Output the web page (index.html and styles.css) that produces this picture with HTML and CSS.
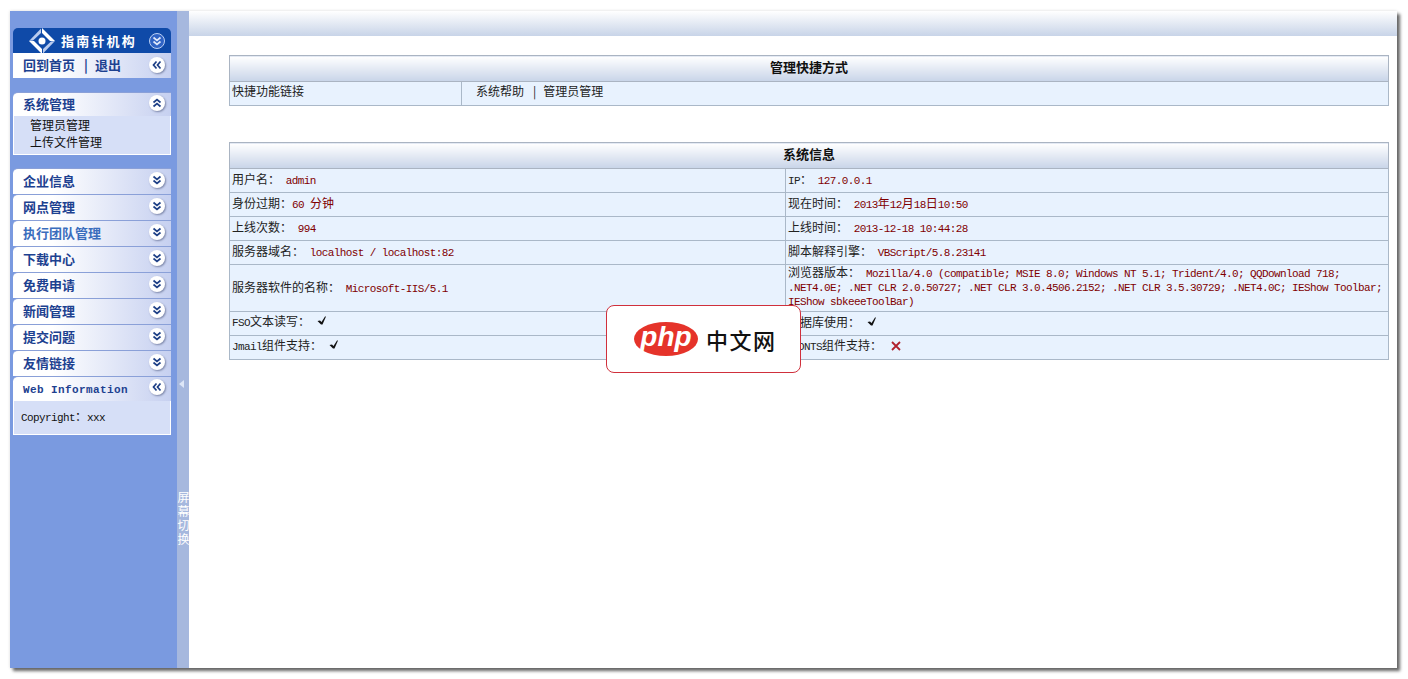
FILE: index.html
```html
<!DOCTYPE html>
<html lang="en">
  <head>
    <meta charset="UTF-8" />
    <title>管理中心</title>
    <link rel="stylesheet" href="styles.css">
  </head>
  <body>
  <svg class="defs" width="0" height="0">
    <symbol id="chev" viewBox="0 0 10 10">
      <path d="M1.5 4.5L5 1.5L8.5 4.5M1.5 8.5L5 5.5L8.5 8.5" fill="none" stroke="currentColor" stroke-width="1.7"/>
    </symbol>
    <symbol id="tick" viewBox="0 0 10 9">
      <path d="M0.5 5L3 4.5L4.5 6L8 0.5L9 0.5L5.5 8.5H4Z" fill="#111"/>
    </symbol>
    <symbol id="cross" viewBox="0 0 10 10">
      <path d="M1 1L9 9M9 1L1 9" fill="none" stroke="#b0202c" stroke-width="1.8"/>
    </symbol>
  </svg>

  <div class="window">
    <div class="side">
      <div class="logo-row">
        <svg class="logo" width="28" height="26" viewBox="0 0 28 26">
          <path d="M14 0L27 13L22 13L14 5Z" fill="#fff"/>
          <path d="M14 26L1 13L6 13L14 21Z" fill="#fff"/>
          <path d="M13 0.5L1 13L5 12.5L13 5Z" fill="#b9cbef"/>
          <path d="M15 25.5L27 13L23 13.5L15 21Z" fill="#b9cbef"/>
          <circle cx="14" cy="13" r="3.5" fill="#fff"/>
        </svg>
        <span class="logo-text">指南针机构</span>
        <span class="round round-blue"><svg width="10" height="10" class="down"><use href="#chev"/></svg></span>
      </div>
      <div class="row home-row">
        <span class="row-title">回到首页<span class="sep">|</span>退出</span>
        <span class="round"><svg width="10" height="10" class="left"><use href="#chev"/></svg></span>
      </div>

      <div class="group">
        <div class="row first-row">
          <span class="row-title">系统管理</span>
          <span class="round"><svg width="10" height="10"><use href="#chev"/></svg></span>
        </div>
        <div class="panel links">
          <div>管理员管理</div>
          <div>上传文件管理</div>
        </div>
      </div>

      <div class="group">
        <div class="row"><span class="row-title">企业信息</span><span class="round"><svg width="10" height="10" class="down"><use href="#chev"/></svg></span></div>
        <div class="row"><span class="row-title">网点管理</span><span class="round"><svg width="10" height="10" class="down"><use href="#chev"/></svg></span></div>
        <div class="row"><span class="row-title hover">执行团队管理</span><span class="round"><svg width="10" height="10" class="down"><use href="#chev"/></svg></span></div>
        <div class="row"><span class="row-title">下载中心</span><span class="round"><svg width="10" height="10" class="down"><use href="#chev"/></svg></span></div>
        <div class="row"><span class="row-title">免费申请</span><span class="round"><svg width="10" height="10" class="down"><use href="#chev"/></svg></span></div>
        <div class="row"><span class="row-title">新闻管理</span><span class="round"><svg width="10" height="10" class="down"><use href="#chev"/></svg></span></div>
        <div class="row"><span class="row-title">提交问题</span><span class="round"><svg width="10" height="10" class="down"><use href="#chev"/></svg></span></div>
        <div class="row"><span class="row-title">友情链接</span><span class="round"><svg width="10" height="10" class="down"><use href="#chev"/></svg></span></div>
        <div class="row first-row"><span class="row-title web-title">Web Information</span><span class="round"><svg width="10" height="10" class="left"><use href="#chev"/></svg></span></div>
        <div class="panel copy"><span class="en">Copyright</span>：<span class="en">xxx</span></div>
      </div>
    </div>

    <div class="split">
      <span class="split-arrow"></span>
      <span class="split-text">屏幕切换</span>
    </div>

    <div class="main">
      <div class="topbar"></div>
      <div class="content">
        <table class="tb">
          <colgroup><col class="c-short"><col></colgroup>
          <tr><th colspan="2">管理快捷方式</th></tr>
          <tr class="r25">
            <td>快捷功能链接</td>
            <td class="quick">系统帮助<span class="sep">|</span>管理员管理</td>
          </tr>
        </table>

        <table class="tb tb-info">
          <colgroup><col class="c-half"><col></colgroup>
          <tr><th colspan="2">系统信息</th></tr>
          <tr>
            <td>用户名： <b class="val en">admin</b></td>
            <td><span class="en">IP</span>： <b class="val en">127.0.0.1</b></td>
          </tr>
          <tr>
            <td>身份过期：<b class="val val-tight"><span class="en">60&nbsp;</span>分钟</b></td>
            <td>现在时间： <b class="val"><span class="en">2013</span>年<span class="en">12</span>月<span class="en">18</span>日<span class="en">10:50</span></b></td>
          </tr>
          <tr>
            <td>上线次数： <b class="val en">994</b></td>
            <td>上线时间： <b class="val en">2013-12-18 10:44:28</b></td>
          </tr>
          <tr>
            <td>服务器域名： <b class="val en">localhost / localhost:82</b></td>
            <td>脚本解释引擎： <b class="val en">VBScript/5.8.23141</b></td>
          </tr>
          <tr class="tall-row">
            <td>服务器软件的名称： <b class="val en">Microsoft-IIS/5.1</b></td>
            <td class="tall"><span class="tall-label">浏览器版本：</span> <b class="val val-tight">Mozilla/4.0 (compatible; MSIE 8.0; Windows NT 5.1; Trident/4.0; QQDownload 718; .NET4.0E; .NET CLR 2.0.50727; .NET CLR 3.0.4506.2152; .NET CLR 3.5.30729; .NET4.0C; IEShow Toolbar; IEShow sbkeeeToolBar)</b></td>
          </tr>
          <tr class="mark-row">
            <td><span class="en">FSO</span>文本读写： <svg class="mark" width="10" height="9"><use href="#tick"/></svg></td>
            <td>数据库使用： <svg class="mark" width="10" height="9"><use href="#tick"/></svg></td>
          </tr>
          <tr class="mark-row">
            <td><span class="en">Jmail</span>组件支持： <svg class="mark" width="10" height="9"><use href="#tick"/></svg></td>
            <td><span class="en fonts">FONTS</span>组件支持： <svg class="mark mark-x" width="10" height="10"><use href="#cross"/></svg></td>
          </tr>
        </table>
      </div>
    </div>
  </div>

  <div class="badge">
    <svg width="66" height="36" viewBox="0 0 66 36">
      <ellipse cx="33" cy="18" rx="32" ry="17" fill="#e5332a"/>
      <text class="badge-php" x="33" y="25" text-anchor="middle">php</text>
    </svg>
    <span class="badge-text">中文网</span>
  </div>
  </body>
</html>
```

FILE: styles.css
```css
body
{
    margin: 0;
    background: #fff;
    font-family: "Noto Sans CJK SC", "Liberation Mono", monospace;
    font-size: 12px;
    color: #222;
}
.defs
{
    position: absolute;
}
.en
{
    font-family: "Liberation Mono", monospace;
    font-size: 11px;
    letter-spacing: -0.6px;
}

.window
{
    display: flex;
    height: 657px;
    margin: 11px 11px 11px 10px;
    box-shadow: 3px 3px 3px #666, 0 0 3px #ddd;
}

/* left menu */
.side
{
    width: 158px;
    padding: 17px 6px 0 3px;
    background: #7a9ae0;
}
.logo-row
{
    display: flex;
    align-items: center;
    height: 25px;
    padding-left: 15px;
    background: #0f4aa8;
    border-radius: 5px 5px 0 0;
    box-sizing: border-box;
}
.logo-text
{
    margin-left: 5px;
    color: #fff;
    font-size: 13px;
    font-weight: 700;
    letter-spacing: 2.2px;
    white-space: nowrap;
}
.round-blue
{
    margin-left: auto;
}
.row
{
    display: flex;
    align-items: center;
    justify-content: space-between;
    box-sizing: border-box;
    height: 26px;
    padding: 0 6px 3px 10px;
    background: linear-gradient(to right, #fff 25%, #c6d0f0);
    border-top: 1px solid #8aa0d8;
    border-radius: 5px 0 0 0;
}
.home-row
{
    height: 25px;
    padding-bottom: 2px;
    border-top: 0;
    border-radius: 0;
}
.first-row
{
    height: 25px;
    padding-bottom: 4px;
}
.row-title
{
    color: #1d4190;
    font-size: 13px;
    font-weight: 700;
    white-space: nowrap;
}
.sep
{
    margin: 0 7px 0 9px;
}
.hover
{
    color: #3a6dbd;
}
.web-title
{
    margin-top: 6px;
    font-family: "Liberation Mono", monospace;
    font-size: 11px;
    letter-spacing: 0.4px;
}
.round
{
    display: flex;
    align-items: center;
    justify-content: center;
    width: 16px;
    height: 16px;
    border-radius: 50%;
    background: #fff;
    color: #1d3f86;
    box-shadow: 1px 1px 2px #7c86a8;
}
.round-blue
{
    margin-right: 6px;
    background: #2f63c4;
    color: #dfe8fa;
    border: 1px solid #bcd0f4;
    box-sizing: border-box;
    box-shadow: none;
}
.down
{
    transform: rotate(180deg);
}
.left
{
    transform: rotate(-90deg);
}
.group
{
    margin-top: 14px;
}
.group + .group
{
    margin-top: 13px;
}
.panel
{
    background: #d6dff7;
    border: 1px solid #fff;
    border-top: 0;
}
.links
{
    height: 38px;
    padding-left: 16px;
    line-height: 17px;
    color: #111;
}
.links div:first-child
{
    margin-top: -1px;
}
.copy
{
    height: 33px;
    padding-left: 7px;
    line-height: 30px;
    color: #111;
}

/* splitter */
.split
{
    position: relative;
    width: 12px;
    background: #a6b8de;
}
.split-arrow
{
    position: absolute;
    top: 369px;
    left: 2px;
    border: 4px solid transparent;
    border-left-width: 0;
    border-right: 5px solid #dde6f7;
}
.split-text
{
    position: absolute;
    top: 480px;
    left: 0;
    width: 12px;
    font-size: 12px;
    line-height: 12px;
    letter-spacing: 2px;
    color: #fff;
    writing-mode: vertical-rl;
    text-orientation: upright;
}

/* main area */
.main
{
    flex: 1;
    background: #fff;
}
.topbar
{
    height: 25px;
    background: linear-gradient(to bottom, #fff, #c8d4e8);
}
.content
{
    padding: 19px 8px 0 40px;
}
.tb
{
    width: 1160px;
    border-collapse: collapse;
    table-layout: fixed;
    background: #e8f2fe;
}
.tb-info
{
    margin-top: 36px;
}
.c-short
{
    width: 232px;
}
.c-half
{
    width: 556px;
}
.tb th
{
    padding: 0 0 4px;
    box-sizing: border-box;
    height: 26px;
    border: 1px solid #aab4c2;
    background: linear-gradient(to bottom, #fff, #c8d4e8);
    font-size: 13px;
    font-weight: 700;
    color: #111;
}
.tb td
{
    height: 21px;
    padding: 0 2px 2px;
    border: 1px solid #aab8c8;
    line-height: 14px;
    vertical-align: middle;
}
.tb .r25 td
{
    height: 23px;
    padding-bottom: 0;
    vertical-align: top;
    line-height: 18px;
}
.tb .quick
{
    padding-left: 14px;
}
.tb .tall-row td
{
    padding-bottom: 0;
}
.tb .mark-row td
{
    height: 20px;
    padding-bottom: 3px;
}
.tb .tall
{
    height: 46px;
    font-family: "Liberation Mono", monospace;
    font-size: 11px;
    letter-spacing: -0.6px;
}
.tall-label
{
    font-family: "Noto Sans CJK SC", sans-serif;
    font-size: 12px;
    line-height: 0;
    letter-spacing: 0;
}
.val
{
    margin-left: 3px;
    font-weight: 400;
    color: #800000;
}
.val-tight
{
    margin-left: 0;
}
.fonts
{
    margin-left: 4px;
}
.mark
{
    margin-left: 4px;
    vertical-align: 1px;
}
.mark-x
{
    margin-left: 6px;
    vertical-align: -1px;
}

/* floating badge */
.badge
{
    position: absolute;
    top: 305px;
    left: 606px;
    display: flex;
    align-items: center;
    box-sizing: border-box;
    width: 195px;
    height: 68px;
    padding-left: 26px;
    background: #fff;
    border: 1px solid #d0303c;
    border-radius: 8px;
}
.badge-php
{
    fill: #fff;
    font-family: "Liberation Sans", sans-serif;
    font-size: 28px;
    font-style: italic;
    font-weight: 700;
}
.badge-text
{
    margin-left: 7px;
    font-size: 22px;
    font-weight: 500;
    color: #111;
    letter-spacing: 1.5px;
}
```
